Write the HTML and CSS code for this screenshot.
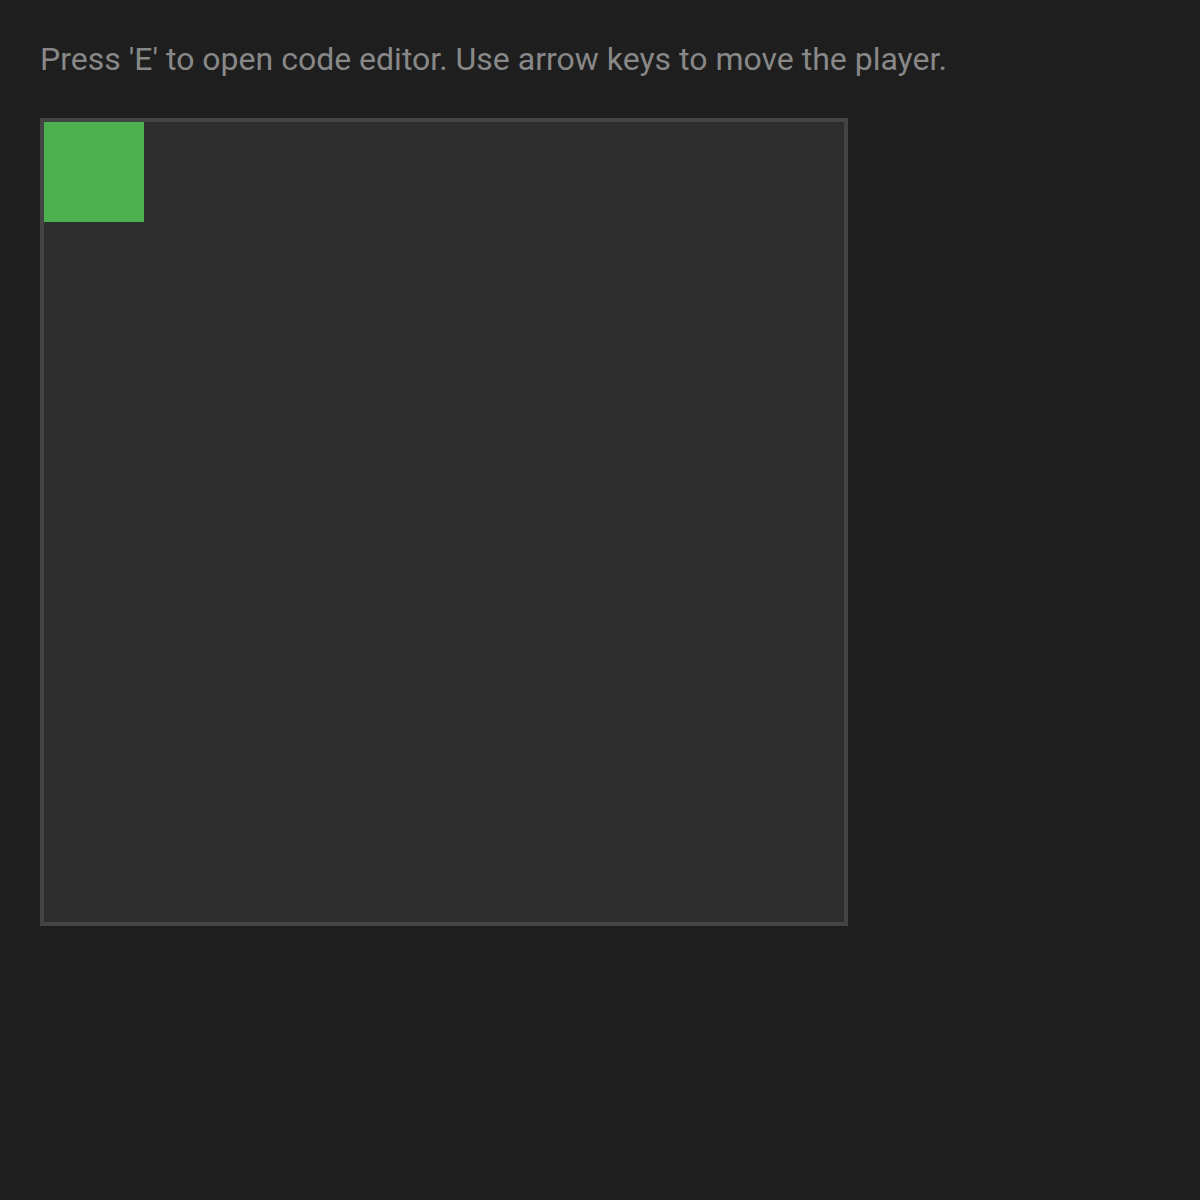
FILE: index.html
```html
<!DOCTYPE html>
<html>
<head>
<meta charset="utf-8">
<link rel="stylesheet" href="styles.css">
</head>
<body>
<p class="hint">Press 'E' to open code editor. Use arrow keys to move the player.</p>
<div class="game">
  <div class="player"></div>
</div>
</body>
</html>
```
FILE: styles.css
```css
html, body {
  margin: 0;
  background: #1e1e1e;
}
body {
  padding: 40px;
  font-family: Roboto, "Liberation Sans", sans-serif;
}
.hint {
  margin: 0 0 40px 0;
  font-size: 32px;
  color: #888888;
}
.game {
  width: 800px;
  height: 800px;
  border: 4px solid #444444;
  background: #2d2d2d;
}
.player {
  width: 100px;
  height: 100px;
  background: #4caf50;
}
```
